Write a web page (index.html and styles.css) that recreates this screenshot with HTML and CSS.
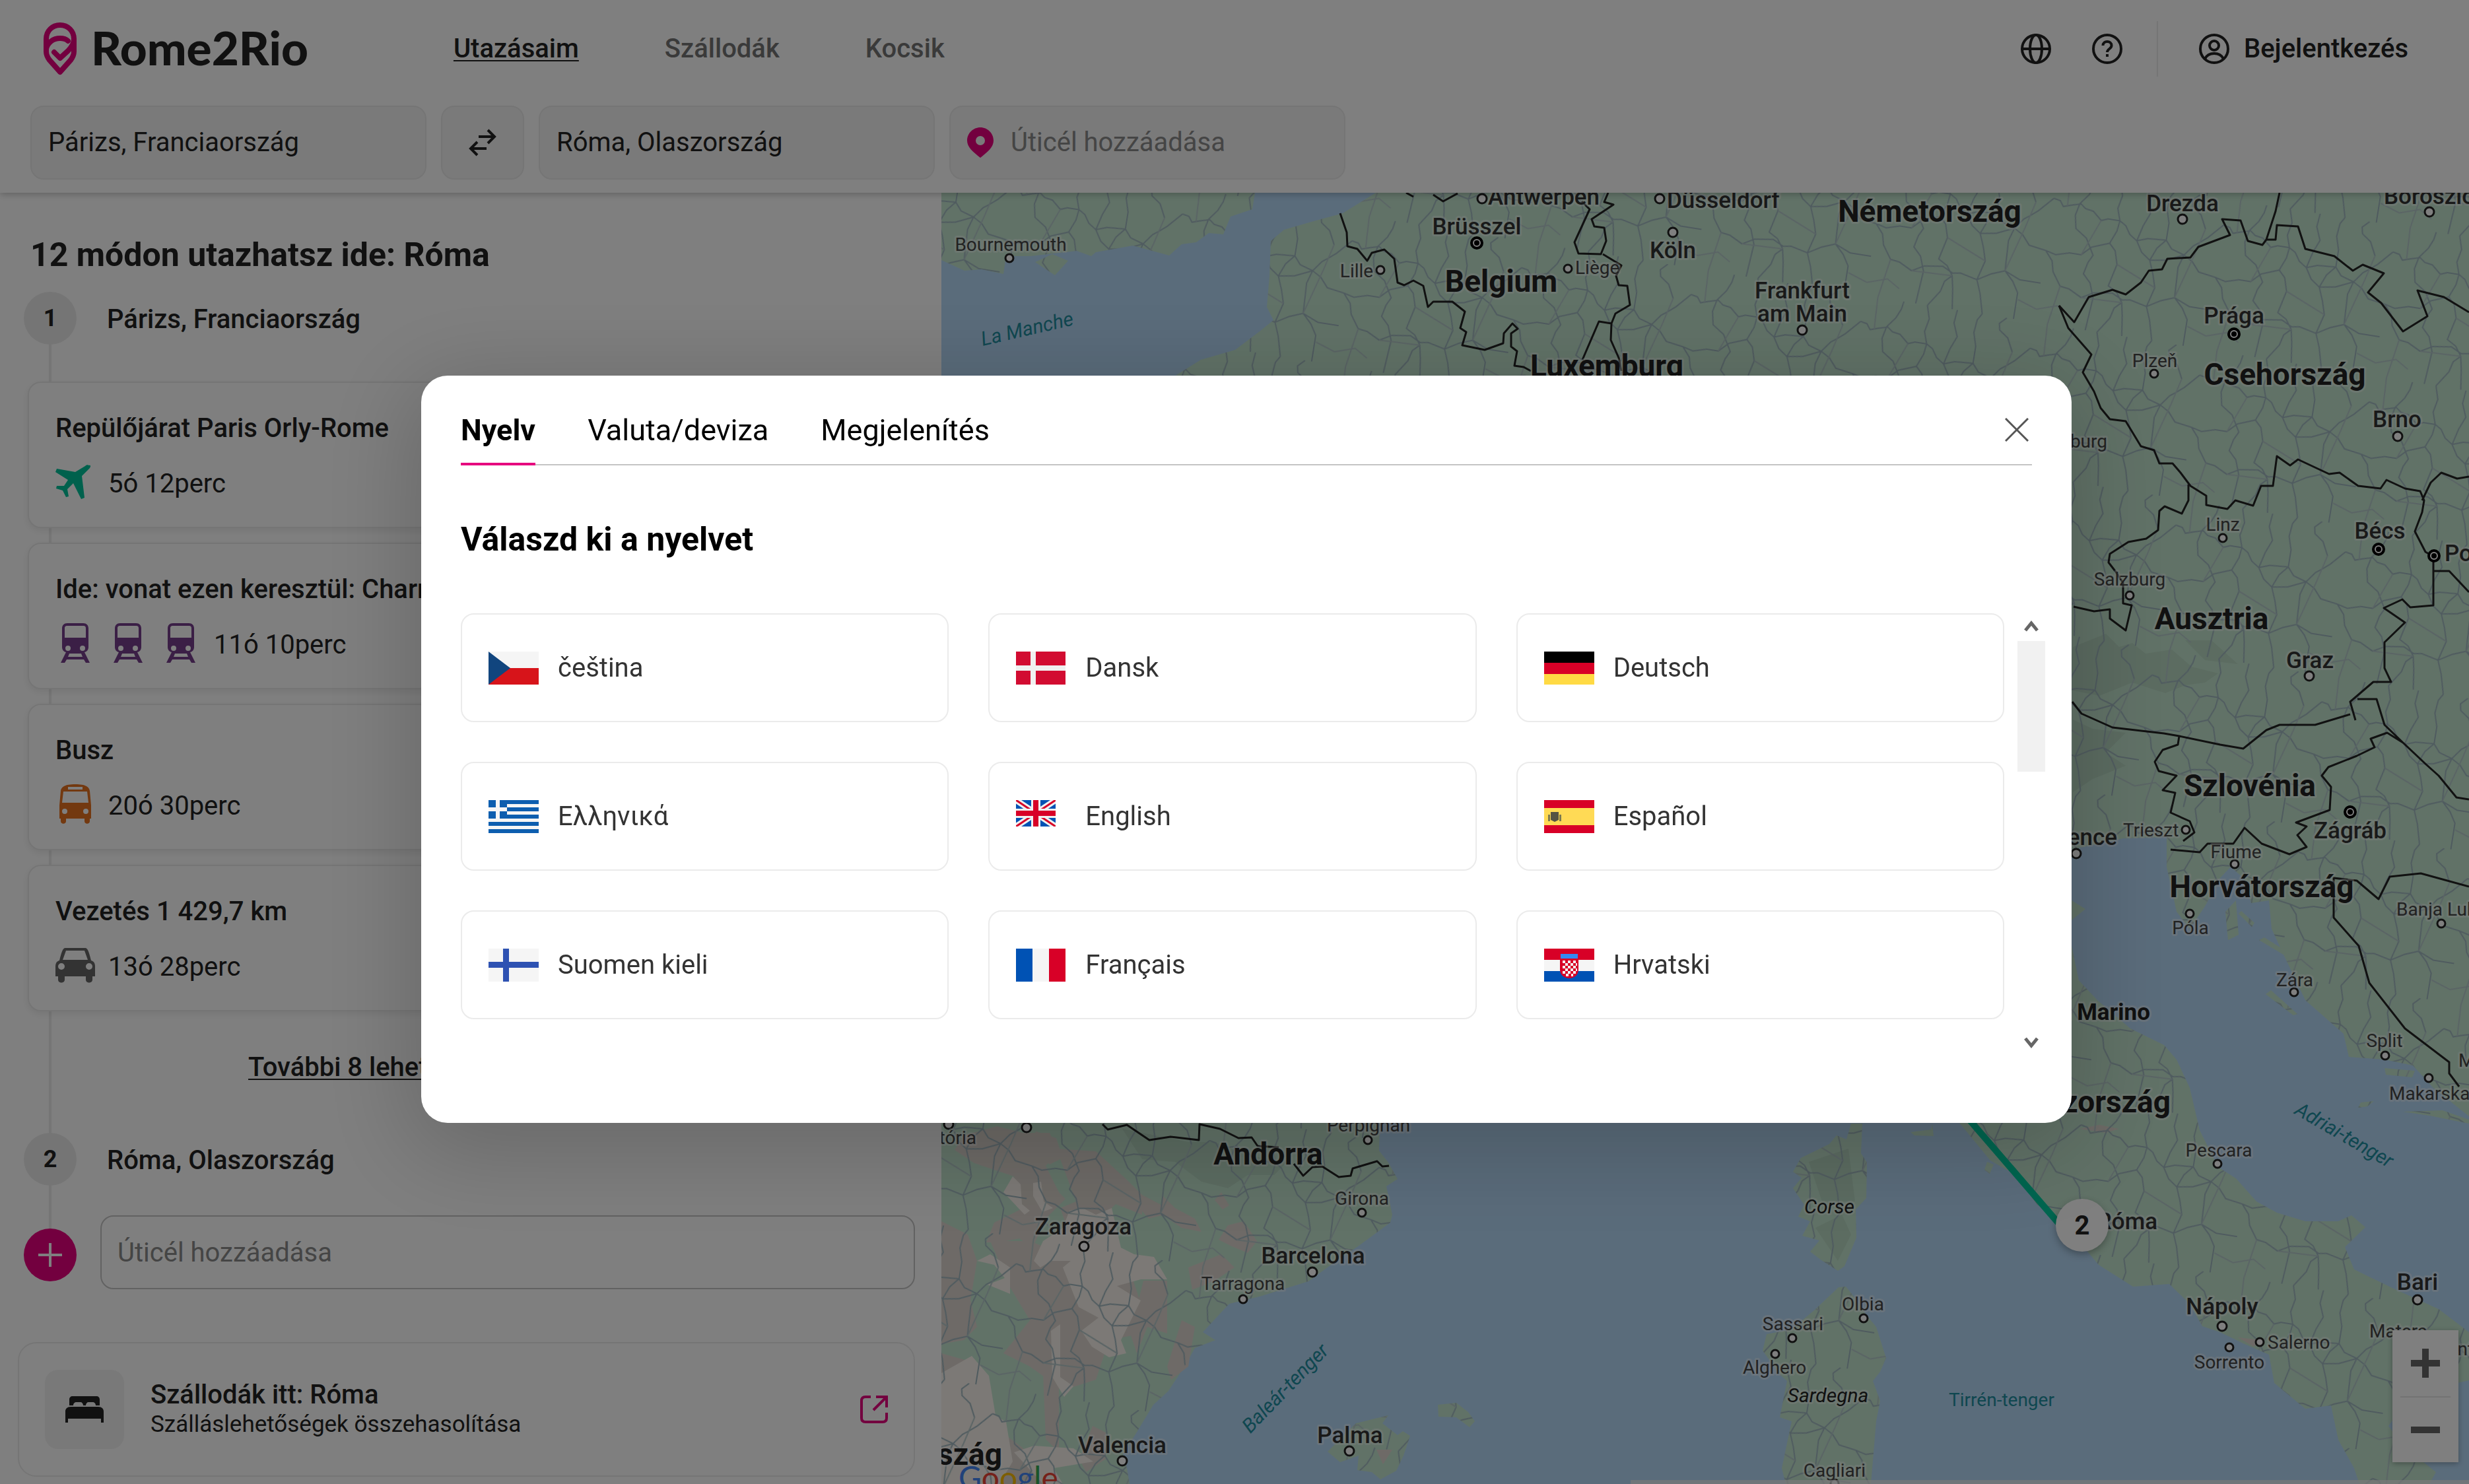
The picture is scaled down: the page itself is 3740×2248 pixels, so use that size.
FILE: index.html
```html
<!DOCTYPE html>
<html lang="hu">
<head>
<meta charset="utf-8">
<title>Rome2Rio</title>
<link rel="stylesheet" href="styles.css">
</head>
<body>
<header class="header">
  <div class="topbar">
    <a class="logo" href="#">
      <svg class="logo-pin" viewBox="0 0 50 80" aria-hidden="true"><g fill="none" stroke="#e6007e" stroke-width="8" stroke-linejoin="round" stroke-linecap="round"><path d="M4 42V25C4 13 13 4 25 4s21 9 21 21c0 8-4 13-9 18L25 54l-9-9"/><path d="M4 40c2-9 10-16 21-16 5 0 9 1 12 4"/><path d="M46 26v18c0 5-2 9-5 13L25 75 9 57c-3-4-5-8-5-13"/></g></svg>
      <span class="wordmark">Rome2Rio</span>
    </a>
    <nav class="nav">
      <a class="nav-link nav-active" href="#">Utazásaim</a>
      <a class="nav-link" href="#">Szállodák</a>
      <a class="nav-link" href="#">Kocsik</a>
    </nav>
    <div class="tools">
      <button class="icon-button" type="button" aria-label="Nyelv"><svg viewBox="0 0 46 46" fill="none" stroke="#222" stroke-width="4"><circle cx="23" cy="23" r="21"/><ellipse cx="23" cy="23" rx="9" ry="21"/><path d="M2 23h42"/></svg></button>
      <button class="icon-button" type="button" aria-label="Súgó"><svg viewBox="0 0 46 46" fill="none" stroke="#222" stroke-width="4"><circle cx="23" cy="23" r="21"/><path d="M16.500 18c0-4 3-6 6.500-6s6.500 2 6.500 6c0 5-6.500 5-6.500 10M23 31v4"/></svg></button>
      <a class="login" href="#"><svg viewBox="0 0 46 46" fill="none" stroke="#222" stroke-width="4"><circle cx="23" cy="23" r="21"/><circle cx="23" cy="18" r="7"/><path d="M9 38c3-6 8-8 14-8s11 2 14 8"/></svg>Bejelentkezés</a>
    </div>
  </div>
  <form class="search">
    <label class="field"><input type="text" value="Párizs, Franciaország" aria-label="Indulás"></label>
    <button class="swap" type="button" aria-label="Csere"><svg viewBox="0 0 42 42" fill="none" stroke="#222" stroke-width="4"><path d="M15 12h24M29 2l10 10-10 10M27 30H3M13 20L3 30l10 10"/></svg></button>
    <label class="field"><input type="text" value="Róma, Olaszország" aria-label="Érkezés"></label>
    <label class="field"><svg class="field-pin" viewBox="0 0 40 46"><path fill="#e6007e" fill-rule="evenodd" d="M20 0C9 0 0 9 0 20c0 10 9 17 20 26 11-9 20-16 20-26C40 9 31 0 20 0zm0 13a7 7 0 110 14 7 7 0 010-14z"/></svg><input type="text" placeholder="Úticél hozzáadása" aria-label="Úticél hozzáadása"></label>
  </form>
</header>

<main class="main">
  <section class="panel">
    <h1 class="panel-title">12 módon utazhatsz ide: Róma</h1>
    <div class="timeline">
      <div class="stop"><span class="badge">1</span><span>Párizs, Franciaország</span></div>
      <ul class="routes">
        <li class="route">
          <h2>Repülőjárat Paris Orly-Rome</h2>
          <div class="route-info"><svg viewBox="0 0 60 60"><path fill="#00c29a" d="M51 4c2-1 3 1 1 4L40 20l4 33-5 2-12-24-9 9 2 11-4 1-5-10-10-3 1-4h11l6-9L0 14l2-5 28 5L45 5c2-2 4-2 6-1z" transform="translate(0 1)"/></svg><span>5ó 12perc</span></div>
        </li>
        <li class="route">
          <h2>Ide: vonat ezen keresztül: Charmes</h2>
          <div class="route-info"><svg viewBox="0 0 60 60"><use href="#train"/></svg><svg viewBox="0 0 60 60"><use href="#train"/></svg><svg viewBox="0 0 60 60"><use href="#train"/></svg><span>11ó 10perc</span></div>
        </li>
        <li class="route">
          <h2>Busz</h2>
          <div class="route-info"><svg viewBox="0 0 60 60"><path fill="#e67321" fill-rule="evenodd" d="M8 10C9 4 14 0 30 0s21 4 22 10l2 22v20h-2v4c0 5-8 5-8 0v-4H16v4c0 5-8 5-8 0v-4H6V32zM19 4v4h22V4zm-7 7l-2 17h40l-2-17zm2 26a4 4 0 100 8 4 4 0 000-8zm32 0a4 4 0 100 8 4 4 0 000-8z"/></svg><span>20ó 30perc</span></div>
        </li>
        <li class="route">
          <h2>Vezetés 1 429,7 km</h2>
          <div class="route-info"><svg viewBox="0 0 60 60"><path fill="#666" fill-rule="evenodd" d="M15 4h30c4 0 6 7 9 19 4 1 6 4 6 9v15h-4v5c0 6-10 6-10 0v-5H14v5c0 6-10 6-10 0v-5H0V32c0-5 2-8 6-9C9 11 11 4 15 4zm1 4l-5 14h38L44 8zm-7 19a5 5 0 100 10 5 5 0 000-10zm42 0a5 5 0 100 10 5 5 0 000-10z"/></svg><span>13ó 28perc</span></div>
        </li>
      </ul>
      <a class="more" href="#">További 8 lehetőség megjelenítése<svg viewBox="0 0 36 36" fill="none" stroke="#222" stroke-width="4"><path d="M6 12l12 12 12-12"/></svg></a>
      <div class="stop"><span class="badge">2</span><span>Róma, Olaszország</span></div>
      <div class="add">
        <button class="add-button" type="button" aria-label="Hozzáadás"><svg viewBox="0 0 36 36" stroke="#fff" stroke-width="4"><path d="M18 0v36M0 18h36"/></svg></button>
        <input class="add-input" type="text" placeholder="Úticél hozzáadása" aria-label="Új úticél">
      </div>
    </div>
    <a class="hotel" href="#">
      <span class="hotel-icon"><svg viewBox="0 0 58 40" fill="#222"><path d="M11 0h36c3 0 5 2 5 5v9h-6c0-3-2-5-5-5h-6c-2 0-4 2-4 5h-4c0-3-2-5-4-5h-6c-3 0-5 2-5 5H6V5c0-3 2-5 5-5zM8 16h42c5 0 8 3 8 7v17h-4v-6H4v6H0V23c0-4 3-7 8-7z"/></svg></span>
      <span class="hotel-text"><strong>Szállodák itt: Róma</strong><small>Szálláslehetőségek összehasolítása</small></span>
      <svg class="external" viewBox="0 0 42 42" fill="none" stroke="#e6007e" stroke-width="4"><path d="M16 2H8C4 2 2 4 2 8v26c0 4 2 6 6 6h26c4 0 6-2 6-6v-8M24 2h16v16M40 2L20 22"/></svg>
    </a>
  </section>

  <section class="map" aria-label="Térkép">
    <svg class="map-canvas" viewBox="1426 292 2314 1956" preserveAspectRatio="xMinYMin slice">
      <defs>
        <g id="train"><path fill="#763f8c" fill-rule="evenodd" d="M18 0h24c5 0 8 3 8 8v28c0 4-2 7-6 8l8 16h-6l-3-5H17l-3 5H8l8-16c-4-1-6-4-6-8V8c0-5 3-8 8-8zm0 4c-3 0-4 1-4 4v14h32V8c0-3-1-4-4-4zm1 30a4 4 0 100 8 4 4 0 000-8zm22 0a4 4 0 100 8 4 4 0 000-8zM21 46l-2 5h22l-2-5z"/></g>
        <pattern id="roads" width="260" height="230" patternUnits="userSpaceOnUse" patternTransform="rotate(9)">
          <path fill="none" stroke="#9fb6bf" stroke-width="2" d="M0 40l10 2 6 8 12-4 14-4 8 6 12 2 14 12 10-4 18 0 10 6 8 12 12 8 16-6 28-2 10 12 20 6 12-16 8-6 12-10 20-22M60 0l-2 12-6 14-12 16-4 18 4 20 18 12 14 24-6 12-4 18 12 12 8 22-4 50M104 58l-2 16-8 20 10 10 6 20-8 34 14 8 10 14 4 20 4 30M180 0l-6 10-2 20 6 20 0 26-12 14-8 20 8 20 6 20-8 30 8 20 8 30M208 94l14 8 12 14 26 4M0 120l16 4 20-6 18 0 14-14 26-10M0 120l12 14 4 16 14 20 14 2 20 10 18-10 28-4 16 8 12-2 26 6 20-12 20-8 24 10 32 0M134 84l10 16 14 10 24-4 26-12-6 20 2 46 14 14 10 16 0 40M218 0l-10 10 2 10 14 10 10 20M142 0l-2 20 8 20-8 20-6 24M126 180l-10 10-4 16-16 24M96 0l6 20-4 20 6 18"/>
          <path fill="none" stroke="#b4c8ca" stroke-width="2" d="M20 0l2 48M76 62l-22 56M110 124l62 26M234 50l-10 40-20 70M30 170l-10 60M64 182l62-2M0 210l30-10 20 12M230 200l30 10"/>
        </pattern>
        <g id="landmass">
          <path d="M1426 292H1901L1897 317 1864 328 1853 355 1831 353 1812 367 1790 370 1771 387 1716 372 1660 382 1653 388 1631 380 1561 388 1524 388 1520 415 1487 408 1461 410 1426 394zM1594 385l24 10-20 22-30-20z"/>
          <path d="M2084 292L2034 323 1990 335 1945 348 1925 365 1923 418 1919 465 1929 485 1908 502 1871 530 1819 545 1782 568 1700 800 1426 900V2248H1711L1707 2224 1701 2203 1721 2171 1747 2128 1770 2107 1796 2067 1810 2042 1841 2030 1822 2018 1862 1975 1908 1964 1982 1941 2023 1911 2057 1888 2106 1852 2109 1840 2100 1797 2117 1786 2103 1761 2089 1743 2090 1702 2300 1500 2800 1500 2969 1702 3015 1758 3052 1779 3086 1825 3121 1847 3179 1916 3231 1949 3286 1945 3317 1975 3336 2009 3363 2018 3398 2035 3437 2052 3445 2095 3492 2134 3531 2129 3542 2181 3566 2224 3574 2248H3680L3690 2230 3640 2190 3618 2160 3640 2130 3700 2100 3740 2091V2018L3694 1983 3628 1953 3566 1923 3552 1889 3583 1859 3562 1841 3542 1850 3492 1850 3449 1837 3418 1820 3387 1785 3360 1768 3332 1712 3317 1648 3297 1605 3278 1583 3227 1558 3177 1515 3149 1485 3138 1433 3100 1400 3110 1290 3138 1287 3216 1270 3282 1268 3282 1313 3297 1381 3317 1407 3340 1373 3363 1330 3379 1313 3398 1330 3410 1368 3437 1364 3441 1407 3461 1450 3492 1515 3550 1566 3558 1601 3612 1605 3655 1614 3686 1648 3740 1691V292z"/>
          <path d="M2178 2128l28-3 18 14 10 14-8 9-20-15-27-1zM2011 2199l43-43 49-12-9 12 23 18 8-6 11 7-10 30-11 23-24 13-13-11-22-3 2-22-28 10z"/>
          <path d="M2804 1702h17l-2 45 9 14-1 54-16 17 1 43-18 43-10 7-25-16-17-13 14-17-26-7 12-22-18-7 9-18-17-25 13-16-13-9 12-21 43-21 11-13 15 6z"/>
          <path d="M2785 1950l11-1 9 11 23 33 14 17 15 47-9 21-11 14 11 30-6 31-8 95H2705l-6-24 15-71-18-6 11-55-11-10-26-36 6-25 37-7 35-29z"/>
          <path d="M2894 1715l31-4 2-8 2 18-29-1zM3010 1760l10 4-6 14-8-6zM3138 1364l21 13-21 17zM3371 1381l16-17 4 52-16 8zM3395 1380l20 18-4 6-20-20zM3430 1420l70 44 22 14-50-24-50-30zM3440 1500l40 36-6 2-42-32zM3612 1618l46 4-4 10-40-4zM3576 1670l20-2-10 8-14 2zM3640 1684l60-2 40 14v6l-60-12z"/>
        </g>
      </defs>
      <rect x="1426" y="292" width="2314" height="1956" fill="#b5d8f6"/>
      <use href="#landmass" fill="#c3e5cf"/>
      <g fill="#b4d3be" opacity=".7"><path d="M3140 980l50-20 20 20 20-6 20 16 40-6 30 26 40 10-20 14-30 4-30 12-50-16-50 20-50-10zM3140 1090l30 14 50 6-30 30 30 20-50 20-30 20zM3310 970l40 0 40 36-50-6zM1700 1710l100 20 40 0 50 20 60 10-20 20-40 0-30 20-40-10-40-30-50-4zM2740 1760l60-20 10 80-50 0zM2750 1860l40-20 14 30-20 40z"/></g>
      <g fill="#dcd5ce"><path d="M1460 1720l50-14 40 10 40 0 14 30-20 20 20 40 10 10-30 30-20 44-20-14-30 6-20 0 12-30 40-20-10-50-60-20-30-20zM1550 1730l20-16 30 10 10 30-20 10zM1600 1740l60 4 50 46 20 20 0 30-40-16-20 20-20 20-30 6-14-40 24-10zM1426 1850l40 20 14 40-10 60 10 40-20 20-34 6zM1500 1880l60 0 50 20 40 0 60 20 20 60 0 40-50 10-20 60-50 16-50-36-40-20 40-50-30-50zM1700 1800l30 10 50 26-40 10zM1760 1810l20 20 30 16 10 20-30-6-30-20zM1732 1940l36 0 0 80-30-10-16 40-10-30zM1860 1856l24-6 20 30-14 18-24-10-20-10zM1800 1920l50-20 20 20-30 20-34 14zM1790 2000l20 10-10 60-26 20-6-20zM1426 2050l50 14 24 60 10 40 40 30 30 54h-154zM1580 2080l24 0 0 120-20-20zM1655 2160l20 10 0 40-30 20-10-20zM1850 1806l12 20-10 6-12-14zM3150 1710l30-6 30 6-20 6zM2085 2196l24 0-14 22zM3390 2026l36 4-12 10z"/></g>
      <g fill="#f8f3ec"><path d="M1520 1806l14-24 12 12 2 30 12 10-8 6zM1565 1792l12-2 4 30 14 10-16 6-14-24zM1620 1834l20-4 20 10 24-10 14 60 20 10 30 4 20 34-40 0-36 10 26 16 10 6-10 20-20 40 8 20-26 6-26-16-16-24 26-20-30-16-24-60 12-10-30 0-16 10-10-10 14-30 30-20zM1480 1910l20-10 30 20 0 40-34-14 26-10-16-20zM1426 2080l46-26 26 30 10 60 16 10 10 60-20 34h-88zM1592 2016l14-10 0 80 20 14-14 16-18-30zM1536 2200l30-10 60 4 30 20-60 10 14 24h-30z"/></g>
      <use href="#landmass" fill="url(#roads)"/>
      <g fill="none" stroke="#222" stroke-width="3" stroke-linejoin="round">
        <path d="M2030 323L2040 352 2041 373 2056 377 2071 395 2078 383 2097 378 2112 392 2117 428 2127 432 2141 425 2156 433 2163 465 2171 457 2200 457 2219 472 2212 497 2221 503 2215 523 2249 530 2277 520 2278 505 2291 490 2299 498 2289 505 2289 525 2298 532 2294 554 2308 556 2319 562M2130 292l11 6M2171 295l15 10 22-12M2436 292l-6 14 14 4-33 22 4 11 15 2 3 20-8 20-34-1-6-17 23-50-12-12"/>
        <path d="M2428 385l28 17-8 16 4 14 13 1 4 29-22 13-6 15-19-3-25 58M2441 490l-1 25 12 27 4 20"/>
        <path d="M3119 463L3142 488 3164 450 3200 439 3220 446 3243 428 3255 410 3275 408 3283 392 3318 390 3330 374 3378 356 3366 332 3394 334 3405 365 3427 371 3433 363 3447 363 3449 341 3481 343 3492 377 3536 388 3564 410 3579 401 3611 414 3587 443 3607 459 3640 502 3677 479 3662 440 3702 450 3740 473M3453 292l-6 28-14 43"/>
        <path d="M3119 463L3133 497 3168 537 3155 564 3172 593 3182 618 3196 635 3220 638 3243 676 3263 682 3271 702 3291 702 3303 716 3318 736 3342 751 3342 765 3374 771 3386 758 3413 766 3425 736 3443 736 3449 691 3469 705 3481 696 3528 718 3544 716 3572 736 3606 740 3615 727 3643 740 3666 744 3672 758 3669 776 3658 805 3674 836 3686 843 3686 917 3651 920 3639 908 3611 921 3643 943 3612 973 3612 1012 3622 1033 3595 1033 3560 1063 3568 1091M3669 758l13-27 16-15 24 9 18-3M3686 865h24l30 32"/>
        <path d="M3315 734L3315 758 3305 778 3279 767 3271 774 3269 803 3251 816 3224 821 3196 839 3194 852 3204 865 3216 883 3216 914 3229 917 3220 955 3196 937 3196 923 3172 926 3141 919"/>
        <path d="M3139 1063L3153 1081 3200 1102 3278 1111 3301 1115 3363 1128 3398 1134 3433 1106 3453 1098 3507 1098 3560 1082M3301 1115L3299 1128 3276 1136 3264 1154 3270 1168 3297 1175 3276 1197 3295 1201 3288 1231 3317 1244 3324 1261 3307 1274"/>
        <path d="M3288 1287L3332 1291 3344 1278 3383 1278 3400 1254 3426 1278 3468 1294 3494 1283 3480 1265 3494 1252 3478 1246 3529 1227 3531 1192 3517 1175 3527 1162 3570 1145 3597 1132 3591 1119 3616 1110 3640 1125M3571 1059L3600 1059 3612 1098 3640 1125 3675 1158 3694 1175 3721 1208 3740 1211"/>
        <path d="M3740 1343L3667 1323 3620 1328 3603 1362 3570 1334 3535 1330 3535 1390 3573 1433 3589 1489 3643 1558 3710 1609 3710 1626 3725 1646"/>
        <path d="M1670 1703L1678 1711 1707 1704 1741 1727 1773 1722 1816 1727 1817 1703 1848 1710 1876 1724 1896 1723 1905 1736 1937 1738M1960 1763L1974 1781 1988 1768 2003 1767 2028 1783 2046 1781 2049 1770 2086 1759 2094 1767 2104 1766"/>
      </g>
      <g class="dots">
        <circle cx="1529" cy="391" r="6"/><circle cx="2245" cy="301" r="7"/><circle cx="2514" cy="301" r="7"/><circle cx="2534" cy="352" r="7"/><circle cx="2091" cy="409" r="6"/><circle cx="2375" cy="407" r="6"/><circle cx="2730" cy="500" r="7"/><circle cx="3306" cy="332" r="7"/><circle cx="3680" cy="321" r="7"/><circle cx="3263" cy="566" r="6"/><circle cx="3632" cy="661" r="7"/><circle cx="3367" cy="815" r="6"/><circle cx="3226" cy="902" r="6"/><circle cx="3498" cy="1024" r="7"/><circle cx="3311" cy="1257" r="6"/><circle cx="3145" cy="1293" r="7"/><circle cx="3385" cy="1309" r="6"/><circle cx="3317" cy="1384" r="6"/><circle cx="3698" cy="1399" r="6"/><circle cx="3475" cy="1503" r="6"/><circle cx="3613" cy="1599" r="6"/><circle cx="3679" cy="1633" r="6"/><circle cx="3359" cy="1763" r="6"/><circle cx="3366" cy="2009" r="7"/><circle cx="3423" cy="2033" r="6"/><circle cx="3377" cy="2041" r="6"/><circle cx="3662" cy="1969" r="7"/><circle cx="1437" cy="1703" r="7"/><circle cx="1555" cy="1708" r="7"/><circle cx="2072" cy="1727" r="6"/><circle cx="2063" cy="1837" r="6"/><circle cx="1642" cy="1888" r="7"/><circle cx="1988" cy="1927" r="7"/><circle cx="1883" cy="1968" r="6"/><circle cx="1700" cy="2213" r="7"/><circle cx="2044" cy="2198" r="7"/><circle cx="2823" cy="1997" r="6"/><circle cx="2715" cy="2027" r="6"/><circle cx="2689" cy="2051" r="6"/><circle cx="2779" cy="2247" r="6"/>
      </g>
      <g class="capitals">
        <circle cx="2237" cy="368" r="8"/><circle cx="3384" cy="506" r="8"/><circle cx="3603" cy="832" r="8"/><circle cx="3687" cy="842" r="8"/><circle cx="3560" cy="1230" r="8"/>
      </g>
      <g class="capital-cores">
        <circle cx="2237" cy="368" r="4"/><circle cx="3384" cy="506" r="4"/><circle cx="3603" cy="832" r="4"/><circle cx="3687" cy="842" r="4"/><circle cx="3560" cy="1230" r="4"/>
      </g>
      <g class="label country">
        <text x="2274" y="442">Belgium</text><text x="2434" y="570">Luxemburg</text><text x="2923" y="336">Németország</text><text x="3461" y="583">Csehország</text><text x="3350" y="953">Ausztria</text><text x="3408" y="1206">Szlovénia</text><text x="3426" y="1359">Horvátország</text><text x="1921" y="1764">Andorra</text><text class="to-end" x="3288" y="1685">Olaszország</text><text class="to-end" x="1518" y="2219">Spanyolország</text>
      </g>
      <g class="label city">
        <text x="2237" y="355">Brüsszel</text><text class="to-start" x="2254" y="310">Antwerpen</text><text class="to-start" x="2525" y="315">Düsseldorf</text><text x="2534" y="391">Köln</text><text x="2730" y="452">Frankfurt</text><text x="2730" y="487">am Main</text><text x="3306" y="320">Drezda</text><text class="to-start" x="3611" y="309">Boroszló</text><text x="3384" y="490">Prága</text><text x="3631" y="647">Brno</text><text x="3605" y="816">Bécs</text><text class="to-start" x="3703" y="850">Pozsony</text><text x="3499" y="1012">Graz</text><text class="to-end" x="3207" y="1280">Velence</text><text x="3560" y="1270">Zágráb</text><text class="to-end" x="3268" y="1862">Róma</text><text x="3366" y="1991">Nápoly</text><text x="3662" y="1954">Bari</text><text x="1641" y="1870">Zaragoza</text><text x="1989" y="1914">Barcelona</text><text x="1700" y="2201">Valencia</text><text x="2045" y="2186">Palma</text>
      </g>
      <g class="label city"><text class="to-end heavy" x="3257" y="1545">San Marino</text></g>
      <g class="label town">
        <text x="1531" y="380">Bournemouth</text><text x="2055" y="420">Lille</text><text class="to-start" x="2386" y="415">Liège</text><text x="3264" y="556">Plzeň</text><text class="to-end" x="3192" y="678">Regensburg</text><text x="3367" y="804">Linz</text><text x="3226" y="887">Salzburg</text><text class="to-start" x="3216" y="1267">Trieszt</text><text x="3387" y="1300">Fiume</text><text x="3318" y="1415">Póla</text><text class="to-start" x="3630" y="1387">Banja Luka</text><text x="3476" y="1494">Zára</text><text x="3612" y="1586">Split</text><text class="to-start" x="3619" y="1666">Makarska</text><text class="to-start" x="3724" y="1616">Mostar</text><text x="3361" y="1752">Pescara</text><text class="to-start" x="3435" y="2043">Salerno</text><text x="3377" y="2073">Sorrento</text><text class="to-start" x="3589" y="2026">Matera</text><text class="to-start" x="3668" y="2053">Taranto</text><text class="to-end" x="1479" y="1733">Vitória</text><text x="2073" y="1714">Perpignan</text><text x="2063" y="1825">Girona</text><text x="1883" y="1954">Tarragona</text><text x="2822" y="1985">Olbia</text><text x="2716" y="2015">Sassari</text><text x="2688" y="2081">Alghero</text><text x="2779" y="2237">Cagliari</text>
      </g>
      <g class="label island"><text x="2771" y="1838">Corse</text><text x="2769" y="2124">Sardegna</text></g>
      <g class="sea"><text transform="translate(1558 508) rotate(-13)">La Manche</text><text transform="translate(3546 1728) rotate(30)">Adriai-tenger</text><text transform="translate(1954 2110) rotate(-46)">Baleár-tenger</text><text class="upright" x="3032" y="2130">Tirrén-tenger</text></g>
      <path d="M2976 1688L3126 1862" stroke="#00cca0" stroke-width="10"/>
      <text class="google" x="1452" y="2256"><tspan fill="#4285f4">G</tspan><tspan fill="#ea4335">o</tspan><tspan fill="#fbbc05">o</tspan><tspan fill="#4285f4">g</tspan><tspan fill="#34a853">l</tspan><tspan fill="#ea4335">e</tspan></text>
      <rect x="2470" y="2242" width="1270" height="6" fill="#f5f5f5" opacity=".7"/>
      <circle class="marker" cx="3154" cy="1856" r="40"/>
      <text class="marker-text" x="3154" y="1870">2</text>
    </svg>
    <div class="zoom">
      <button type="button" aria-label="Nagyítás"><svg viewBox="0 0 44 44" stroke="#666" stroke-width="10"><path d="M22 0v44M0 22h44"/></svg></button>
      <button type="button" aria-label="Kicsinyítés"><svg viewBox="0 0 44 44" stroke="#666" stroke-width="10"><path d="M0 22h44"/></svg></button>
    </div>
  </section>
</main>

<div class="overlay">
  <div class="modal" role="dialog" aria-label="Nyelv">
    <div class="tabs">
      <button class="tab tab-active" type="button">Nyelv</button>
      <button class="tab" type="button">Valuta/deviza</button>
      <button class="tab" type="button">Megjelenítés</button>
      <button class="close" type="button" aria-label="Bezárás"><svg viewBox="0 0 36 36" stroke="#555" stroke-width="3"><path d="M1 1l34 34M35 1L1 35"/></svg></button>
    </div>
    <h2 class="modal-title">Válaszd ki a nyelvet</h2>
    <div class="scroller">
      <div class="languages">
        <button class="language" type="button"><svg viewBox="0 0 76 50"><path fill="#f5f5f5" d="M0 0h76v25H0z"/><path fill="#d7141a" d="M0 25h76v25H0z"/><path fill="#11457e" d="M0 0l33 25L0 50z"/></svg>čeština</button>
        <button class="language" type="button"><svg viewBox="0 0 76 50"><path fill="#d20c31" d="M0 0h75v50H0z"/><path fill="#f0f0f0" d="M22 0h8v50h-8zM0 21h75v8H0z"/></svg>Dansk</button>
        <button class="language" type="button"><svg viewBox="0 0 76 50"><path d="M0 0h76v17H0z"/><path fill="#d80027" d="M0 17h76v17H0z"/><path fill="#ffda44" d="M0 34h76v16H0z"/></svg>Deutsch</button>
        <button class="language" type="button"><svg viewBox="0 0 76 50"><path fill="#f5f5f5" d="M0 0h76v50H0z"/><path fill="#0d5eaf" d="M0 0h76v6H0zM0 11h76v6H0zM0 22h76v6H0zM0 33h76v6H0zM0 44h76v6H0zM0 0h28v28H0z"/><path fill="#f5f5f5" d="M11 0h6v28h-6zM0 11h28v6H0z"/></svg>Ελληνικά</button>
        <button class="language" type="button"><svg viewBox="0 0 76 50"><clipPath id="uk"><path d="M0 0h60v40H0z"/></clipPath><g clip-path="url(#uk)"><path fill="#0052b4" d="M0 0h60v40H0z"/><path stroke="#f0f0f0" stroke-width="9" d="M0 0l60 40M60 0L0 40"/><path stroke="#d80027" stroke-width="3" d="M0 0l60 40M60 0L0 40"/><path stroke="#f0f0f0" stroke-width="14" d="M30 0v40M0 20h60"/><path stroke="#d80027" stroke-width="8" d="M30 0v40M0 20h60"/></g></svg>English</button>
        <button class="language" type="button"><svg viewBox="0 0 76 50"><path fill="#d80027" d="M0 0h76v50H0z"/><path fill="#ffda55" d="M0 12h76v26H0z"/><path fill="#555443" d="M10 18h12v12l-6 3-6-3z"/><path fill="#7d7a50" d="M6 22h3v10H6zM23 22h3v10h-3z"/></svg>Español</button>
        <button class="language" type="button"><svg viewBox="0 0 76 50"><path fill="#f5f5f5" d="M0 0h76v50H0z"/><path fill="#2e52b2" d="M22 0h9v50h-9zM0 20h76v9H0z"/></svg>Suomen kieli</button>
        <button class="language" type="button"><svg viewBox="0 0 76 50"><path fill="#f5f5f5" d="M0 0h75v50H0z"/><path fill="#0052b4" d="M0 0h25v50H0z"/><path fill="#d80027" d="M50 0h25v50H50z"/></svg>Français</button>
        <button class="language" type="button"><svg viewBox="0 0 76 50"><path fill="#f5f5f5" d="M0 0h76v50H0z"/><path fill="#d80027" d="M0 0h76v17H0z"/><path fill="#0052b4" d="M0 34h76v16H0z"/><path fill="#d80027" d="M24 14h28v18c0 8-7 13-14 13s-14-5-14-13z"/><path fill="#338af3" d="M25 8h26v7H25z"/><path fill="none" stroke="#f5f5f5" stroke-width="4" stroke-dasharray="4 4" d="M28 20h22M32 24h18M28 28h22M32 32h18M28 36h20M33 40h11"/></svg>Hrvatski</button>
      </div>
      <div class="scrollbar">
        <button type="button" aria-label="Fel"><svg viewBox="0 0 22 20" fill="none" stroke="#666" stroke-width="5"><path d="M2 15l9-11 9 11"/></svg></button>
        <div class="thumb"></div>
        <button type="button" aria-label="Le"><svg viewBox="0 0 22 20" fill="none" stroke="#666" stroke-width="5"><path d="M2 3l9 11 9-11"/></svg></button>
      </div>
    </div>
  </div>
</div>
</body>
</html>
```
FILE: styles.css
```css
* { box-sizing: border-box; }

body {
  margin: 0;
  height: 100vh;
  overflow: hidden;
  display: flex;
  flex-direction: column;
  background: #fff;
  color: #222;
  font: 400 40px/50px Roboto, "Liberation Sans", sans-serif;
}

button, input { font: inherit; color: inherit; }
button { border: 0; padding: 0; background: none; display: flex; align-items: center; justify-content: center; }
a { color: inherit; text-decoration: none; }
svg { display: block; flex: none; }

/* Header */
.header {
  position: relative;
  z-index: 1;
  padding-bottom: 20px;
  background: #fff;
  box-shadow: 0 2px 10px rgba(0, 0, 0, .25);
}
.topbar { display: flex; align-items: center; height: 148px; padding: 0 92px 0 66px; font-weight: 500; }
.logo { display: flex; align-items: center; gap: 22px; }
.logo-pin { width: 50px; height: 80px; }
.wordmark { font: 900 71px/80px Lato, sans-serif; margin-bottom: 4px; }
.nav { display: flex; gap: 130px; margin-left: 220px; }
.nav-link { color: #757575; }
.nav-active { color: #222; text-decoration: underline; text-decoration-thickness: 2px; text-underline-offset: 4px; }
.tools { display: flex; align-items: center; margin-left: auto; gap: 62px; }
.icon-button svg, .login svg { width: 46px; height: 46px; }
.login {
  display: flex;
  align-items: center;
  gap: 22px;
  height: 84px;
  margin-left: -10px;
  padding-left: 62px;
  border-left: 2px solid #ebebeb;
}
.search { display: flex; gap: 22px; padding: 12px 46px 0; }
.field, .swap { height: 112px; background: #f4f4f4; border: 2px solid #ebebeb; border-radius: 20px; }
.field { width: 600px; display: flex; align-items: center; gap: 26px; padding: 0 25px; }
.field input { flex: 1; min-width: 0; border: 0; padding: 0; background: none; }
.field-pin { width: 40px; height: 46px; }
.swap { width: 126px; }
.swap svg { width: 42px; height: 42px; }
input::placeholder { color: #8a8a8a; opacity: 1; }

/* Trip panel */
.main { flex: 1; min-height: 0; display: grid; grid-template-columns: 1426px 1fr; }
.panel { padding: 64px 40px 0 0; overflow: hidden; }
.panel-title { margin: 0 0 26px 46px; font-size: 50px; line-height: 60px; font-weight: 700; }
.timeline {
  display: flex;
  flex-direction: column;
  padding-left: 36px;
  background: linear-gradient(#ebebeb, #ebebeb) 74px 0 / 4px calc(100% - 50px) no-repeat;
}
.stop { display: flex; align-items: center; gap: 46px; font-weight: 500; }
.stop span + span { padding-top: 4px; }
.badge {
  width: 80px;
  height: 80px;
  border-radius: 50%;
  background: #ebebeb;
  font-size: 36px;
  font-weight: 700;
  line-height: 80px;
  text-align: center;
}
.routes { list-style: none; margin: 56px 0 60px 6px; padding: 0; display: grid; gap: 22px; }
.route {
  height: 222px;
  padding: 44px 40px 32px;
  background: #fff;
  border: 2px solid #ebebeb;
  border-radius: 20px;
  box-shadow: 0 4px 12px rgba(0, 0, 0, .08);
}
.route h2 { margin: 0 0 26px; font-size: 40px; line-height: 50px; font-weight: 500; white-space: nowrap; }
.route-info { display: flex; align-items: center; gap: 20px; height: 66px; }
.route-info svg { width: 60px; height: 60px; align-self: flex-start; }
.more {
  display: flex;
  align-items: center;
  gap: 14px;
  align-self: center;
  margin-bottom: 74px;
  font-weight: 500;
  text-decoration: underline;
  text-decoration-thickness: 2px;
  text-underline-offset: 4px;
}
.more svg { width: 36px; height: 36px; }
.add { display: flex; align-items: flex-end; gap: 36px; margin-top: 45px; }
.add-button { width: 80px; height: 80px; margin-bottom: 12px; border-radius: 50%; background: #e6007e; }
.add-button svg { width: 36px; height: 36px; }
.add-input { flex: 1; height: 112px; padding: 0 24px; border: 2px solid #c4c4c4; border-radius: 20px; background: #fff; }
.hotel {
  display: flex;
  align-items: center;
  gap: 40px;
  height: 204px;
  margin: 80px 0 0 27px;
  padding: 0 39px;
  border: 2px solid #ebebeb;
  border-radius: 28px;
}
.hotel-icon { display: flex; align-items: center; justify-content: center; width: 120px; height: 120px; border-radius: 20px; background: #f2f2f2; }
.hotel-icon svg { width: 58px; height: 40px; }
.hotel-text { flex: 1; display: grid; }
.hotel-text strong { font-weight: 500; line-height: 46px; }
.hotel-text small { font-size: 35px; line-height: 44px; }
.external { width: 42px; height: 42px; }

/* Map */
.map { position: relative; overflow: hidden; }
.map-canvas { width: 100%; height: 100%; }
.dots { fill: #fff; stroke: #222; stroke-width: 3px; }
.capitals { fill: #fff; stroke: #000; stroke-width: 4px; }
.capital-cores { fill: #000; }
.label { fill: #333; text-anchor: middle; paint-order: stroke; stroke: rgba(255, 255, 255, .4); stroke-width: 6px; stroke-linejoin: round; }
.country { font-size: 46px; font-weight: 700; fill: #222; }
.city { font-size: 35px; font-weight: 500; }
.town { font-size: 28px; fill: #444; }
.island { font-size: 30px; font-style: italic; fill: #222; }
.heavy { font-weight: 700; fill: #222; }
.to-start { text-anchor: start; }
.to-end { text-anchor: end; }
.sea { font-size: 30px; font-style: italic; fill: #1f8ea0; text-anchor: middle; }
.upright { font-style: normal; font-size: 28px; }
.google { font: 400 48px Lato, sans-serif; }
.marker { fill: #fff; filter: drop-shadow(0 4px 6px rgba(0, 0, 0, .3)); }
.marker-text { font-size: 40px; font-weight: 700; fill: #222; text-anchor: middle; }
.zoom { position: absolute; right: 16px; bottom: 33px; width: 100px; padding: 0 12px; background: #fff; box-shadow: 0 2px 8px rgba(0, 0, 0, .3); }
.zoom button { width: 100%; height: 100px; }
.zoom button + button { border-top: 2px solid #e6e6e6; }
.zoom svg { width: 44px; height: 44px; }

/* Language dialog */
.overlay {
  position: fixed;
  inset: 0;
  z-index: 2;
  display: flex;
  align-items: center;
  justify-content: center;
  padding: 22px 0 0 36px;
  background: rgba(0, 0, 0, .5);
}
.modal {
  width: min(2500px, 90%);
  padding: 50px 60px 100px;
  background: #fff;
  border-radius: 40px;
  box-shadow: 0 28px 140px 20px rgba(0, 0, 0, .18);
  color: #000;
}
.tabs { display: flex; gap: 79px; height: 86px; border-bottom: 2px solid #c4c4c4; font-size: 45px; }
.tab { height: 86px; padding-bottom: 16px; border-bottom: 4px solid transparent; }
.tab-active { font-weight: 700; border-bottom-color: #e6007e; }
.close { width: 36px; height: 36px; margin: 14px 5px 0 auto; }
.close svg { width: 36px; height: 36px; }
.modal-title { margin: 81px 0; font-size: 50px; line-height: 62px; font-weight: 700; }
.scroller { display: flex; gap: 20px; height: 672px; margin-right: -20px; overflow: hidden; }
.languages { flex: 1; display: grid; grid-template-columns: repeat(3, 1fr); gap: 60px; align-content: start; }
.language {
  justify-content: flex-start;
  gap: 29px;
  height: 165px;
  padding: 0 40px;
  border: 2px solid #ebebeb;
  border-radius: 20px;
  color: #333;
}
.language svg { width: 76px; height: 50px; }
.scrollbar { width: 42px; display: flex; flex-direction: column; }
.scrollbar button { height: 42px; }
.scrollbar svg { width: 22px; height: 20px; }
.thumb { height: 198px; margin-bottom: auto; background: #f1f1f1; }
```
